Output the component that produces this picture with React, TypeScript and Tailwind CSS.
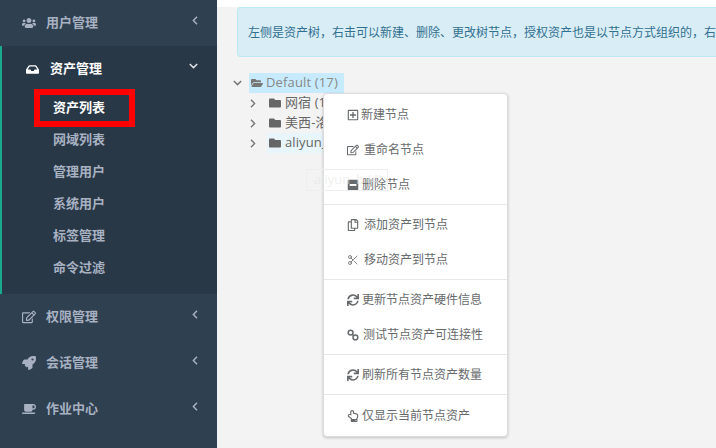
import React from "react";
import { FaUsers, FaInbox, FaRegEdit, FaRocket, FaCoffee, FaFolderOpen, FaFolder, FaRegPlusSquare, FaMinusSquare, FaRegCopy, FaSync, FaRegHandPointUp } from "react-icons/fa";
import { Scissors } from "lucide-react";

const font = "font-['Open_Sans','Noto_Sans_CJK_SC',sans-serif]";

function ChevronLeft() {
  return (
    <svg width="6" height="9" viewBox="0 0 6 9" className="mb-[6px]" fill="none" stroke="currentColor" strokeWidth="1.5">
      <path d="M5 0.8 1.4 4.5 5 8.2" />
    </svg>
  );
}

function ChevronDown({ stroke, className }: { stroke: string; className: string }) {
  return (
    <svg width="9" height="6" viewBox="0 0 9 6" className={className} fill="none" stroke={stroke} strokeWidth="1.5">
      <path d="M0.8 1 4.5 4.6 8.2 1" />
    </svg>
  );
}

function ChevronRight() {
  return (
    <svg width="6" height="9" viewBox="0 0 6 9" className="ml-[33px] mr-[2px]" fill="none" stroke="#777777" strokeWidth="1.4">
      <path d="M1 0.8 4.6 4.5 1 8.2" />
    </svg>
  );
}

function ChainIcon() {
  return (
    <svg width="12" height="12" viewBox="0 0 12 12" fill="none" stroke="currentColor" strokeWidth="1.5">
      <circle cx="3.6" cy="3.6" r="2.4" />
      <circle cx="8.4" cy="8.4" r="2.4" />
      <path d="M5 5 7 7" />
    </svg>
  );
}

function NavRow({ icon, label }: { icon: React.ReactNode; label: string }) {
  return (
    <div className="flex h-[46px] items-center pl-[22px] pr-[19px] text-[13px] font-semibold text-[#a7b1c2]">
      <span className="flex w-[24px] justify-start text-[14px]">{icon}</span>
      <span className="flex-1">{label}</span>
      <ChevronLeft />
    </div>
  );
}

function MenuItem({ icon, label, gap = "gap-[3px]", className = "" }: { icon: React.ReactNode; label: string; gap?: string; className?: string }) {
  return (
    <div className={`flex h-[35px] items-center pl-[23px] text-[12px] text-[#676a6c] ${gap} ${className}`}>
      <span className="flex w-[12px] justify-center text-[12px]">{icon}</span>
      <span>{label}</span>
    </div>
  );
}

function Divider() {
  return <div className="my-[2px] h-px bg-[#e7e7ea]" />;
}

function TreeRow({ label, className = "" }: { label: string; className?: string }) {
  return (
    <div className="flex h-[20px] items-center">
      <ChevronRight />
      <div className={`ml-[9px] flex h-[20px] w-[80px] items-center gap-[4px] pl-[2px] ${className}`}>
        <FaFolder className="text-[12px] text-[#666]" />
        <span className="whitespace-nowrap tracking-[0.1px]">{label}</span>
      </div>
    </div>
  );
}

export default function App() {
  return (
    <div className={`relative flex h-[448px] w-[716px] overflow-hidden bg-[#f3f3f4] ${font}`}>
      <aside className="flex w-[217px] shrink-0 flex-col bg-[#2f4050]">
        <NavRow icon={<FaUsers />} label="用户管理" />
        <div className="h-[248px] border-l-2 border-[#19aa8d] bg-[#293846]">
          <div className="flex h-[46px] items-center pl-[24px] pr-[19px] text-[13px] font-bold text-white">
            <span className="flex w-[24px] text-[13px]"><FaInbox /></span>
            <span className="flex-1">资产管理</span>
            <ChevronDown stroke="#dfe3e9" className="mb-[6px]" />
          </div>
          <div className="flex flex-col pl-[51px] text-[13px] font-semibold text-[#a7b1c2]">
            {["资产列表", "网域列表", "管理用户", "系统用户", "标签管理", "命令过滤"].map((t, i) => (
              <div key={t} className={`flex h-[32px] items-center ${i === 0 ? "font-bold text-white" : ""}`}>{t}</div>
            ))}
          </div>
        </div>
        <div>
          <NavRow icon={<FaRegEdit />} label="权限管理" />
          <NavRow icon={<FaRocket />} label="会话管理" />
          <NavRow icon={<FaCoffee />} label="作业中心" />
        </div>
      </aside>

      <main className="relative min-w-0 flex-1 overflow-hidden">
        <div className="h-[7px] bg-white" />
        <div className="ml-[20px] flex h-[50px] items-center whitespace-nowrap rounded-l-[4px] border border-r-0 border-[#bce8f1] bg-[#d9edf7] pl-[10px] pt-[2px] text-[12px] text-[#31708f]">
          左侧是资产树，右击可以新建、删除、更改树节点，授权资产也是以节点方式组织的，右侧是属于该节点下的资产
        </div>
        <div className="mt-[16px] text-[13px] text-[#666]">
          <div className="flex h-[20px] items-center">
            <ChevronDown stroke="#777777" className="ml-[16px] mr-[7px]" />
            <div className="flex h-[20px] items-center gap-[3px] bg-[#c7ebfd] pl-[2px] pr-[6px] text-[#888]">
              <FaFolderOpen className="text-[12px] text-[#777]" />
              <span className="tracking-[0.15px]">Default (17)</span>
            </div>
          </div>
          <TreeRow label="网宿 (1" />
          <TreeRow label="美西-洛" />
          <TreeRow label="aliyun_" className="bg-[#e8f5fb]" />
        </div>
      </main>

      <div className="absolute left-[323px] top-[93px] w-[185px] rounded-[4px] border border-[#dcdce0] bg-white pt-[3px] shadow-[0_1px_3px_rgba(0,0,0,0.2)]">
        <MenuItem icon={<FaRegPlusSquare />} label="新建节点" gap="gap-[2px]" />
        <MenuItem icon={<FaRegEdit />} label="重命名节点" gap="gap-[5px]" />
        <MenuItem icon={<FaMinusSquare />} label="删除节点" gap="gap-[3px]" />
        <Divider />
        <MenuItem icon={<FaRegCopy />} label="添加资产到节点" gap="gap-[5px]" />
        <MenuItem icon={<Scissors size={12} strokeWidth={1.8} className="text-[#777]" />} label="移动资产到节点" gap="gap-[5px]" />
        <Divider />
        <MenuItem icon={<FaSync />} label="更新节点资产硬件信息" gap="gap-[3px]" />
        <MenuItem icon={<ChainIcon />} label="测试节点资产可连接性" gap="gap-[4px]" />
        <Divider />
        <MenuItem icon={<FaSync />} label="刷新所有节点资产数量" gap="gap-[3px]" />
        <Divider />
        <MenuItem icon={<FaRegHandPointUp />} label="仅显示当前节点资产" gap="gap-[3px]" className="pt-[2px]" />
        <div className="h-[4px]" />
      </div>

      <div className="absolute left-[306px] top-[169px] flex h-[22px] w-[82px] items-center border border-[#eeeeee] pl-[7px] text-[13px] text-[#e6e6e6]/60">
        aliyun_b (4)
      </div>

      <div className="absolute left-[34px] top-[89px] h-[38px] w-[101px] border-[6px] border-[#ff0000]" />
    </div>
  );
}
